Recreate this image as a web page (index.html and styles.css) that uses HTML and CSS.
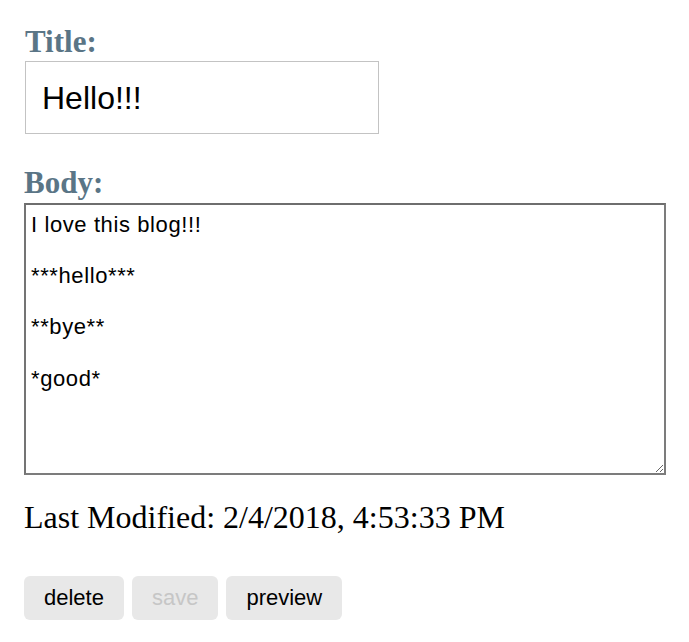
FILE: index.html
```html
<!DOCTYPE html>
<html>
<head>
<meta charset="utf-8">
<link rel="stylesheet" href="styles.css">
</head>
<body>
<div class="editor">
  <label class="field-label" for="title">Title:</label>
  <input class="title-input" id="title" type="text" value="Hello!!!">
  <label class="field-label body-label" for="body">Body:</label>
  <textarea class="body-input" id="body">I love this blog!!!

***hello***

**bye**

*good*</textarea>
  <p class="modified">Last Modified: 2/4/2018, 4:53:33 PM</p>
  <div class="actions">
    <button class="btn">delete</button>
    <button class="btn" disabled>save</button>
    <button class="btn">preview</button>
  </div>
</div>
</body>
</html>
```

FILE: styles.css
```css
html, body {
  margin: 0;
  padding: 0;
  background: #ffffff;
}

.editor {
  display: flex;
  flex-direction: column;
  align-items: flex-start;
  padding: 24px 0 0 24px;
}

.field-label {
  display: block;
  font-family: "Liberation Serif", "Times New Roman", serif;
  font-weight: bold;
  font-size: 31px;
  line-height: 36px;
  color: #5a7586;
  margin: 0 0 1px 1px;
}

.body-label {
  margin: 31px 0 2px 0;
}

.title-input {
  box-sizing: border-box;
  width: 354px;
  height: 73px;
  margin: 0 0 0 1px;
  padding: 18px 16px 16px 16px;
  border: 1px solid #c3c3c3;
  border-radius: 0;
  font-family: "Liberation Sans", Arial, sans-serif;
  font-size: 32px;
  line-height: 37px;
  color: #000;
  outline: none;
}

.body-input {
  box-sizing: border-box;
  width: 642px;
  height: 272px;
  margin: 0;
  padding: 7px 3px 6px 5px;
  border: 2px solid #7c7c7c;
  border-top-color: #6e6e6e;
  border-left-color: #747474;
  border-radius: 0;
  font-family: "Liberation Sans", Arial, sans-serif;
  font-size: 22px;
  line-height: 25.6px;
  letter-spacing: 0.6px;
  color: #000;
  outline: none;
}

.modified {
  margin: 24px 0 0 0;
  font-family: "Liberation Serif", "Times New Roman", serif;
  font-size: 32px;
  line-height: 36px;
  color: #000;
}

.actions {
  display: flex;
  gap: 8px;
  margin-top: 41px;
}

.btn {
  height: 44px;
  padding: 9px 20px 10px 20px;
  border: 0;
  border-radius: 6px;
  background: #e8e8e8;
  font-family: "Liberation Sans", Arial, sans-serif;
  font-size: 22px;
  line-height: 25px;
  color: #000;
}

.btn:disabled {
  color: #c6c6c6;
}
```
